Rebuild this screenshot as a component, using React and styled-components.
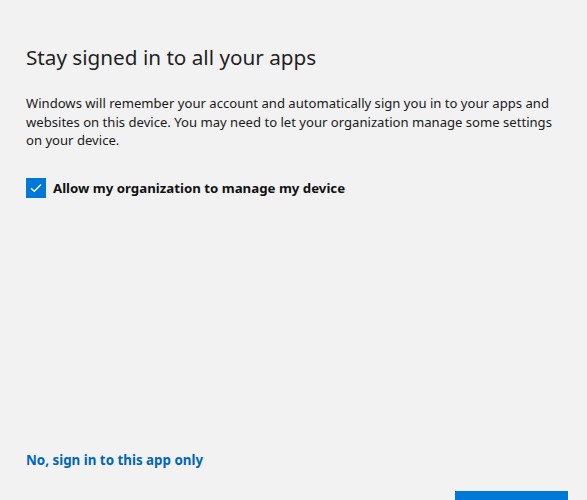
import React, { useState } from 'react';
import styled, { createGlobalStyle } from 'styled-components';

const GlobalStyle = createGlobalStyle`
    html, body {
        margin: 0;
        padding: 0;
        background: #f2f2f2;
    }
    body {
        font-family: 'Noto Sans', 'Open Sans', Arial, sans-serif;
        color: #1a1a1a;
    }
`;

const Page = styled.div`
    height: 500px;
    overflow: hidden;
    box-sizing: border-box;
    padding: 43px 19px 0 26px;
    display: flex;
    flex-direction: column;
`;

const Title = styled.h1`
    margin: 0;
    font-size: 20.7px;
    font-weight: 400;
    line-height: 28px;
    color: #1f1f1f;
`;

const Body = styled.p`
    margin: 23px 0 0;
    font-size: 13.1px;
    line-height: 18.7px;
    color: #1a1a1a;
`;

const CheckRow = styled.label`
    margin-top: 28px;
    display: flex;
    align-items: center;
    gap: 7px;
    cursor: pointer;
    font-size: 13.25px;
    font-weight: 700;
    color: #111;
`;

const Box = styled.span`
    width: 20px;
    height: 20px;
    box-sizing: border-box;
    display: flex;
    align-items: center;
    justify-content: center;
    background: ${({ checked }) => (checked ? '#0078d7' : 'transparent')};
    border: 2px solid ${({ checked }) => (checked ? '#0078d7' : '#333')};
`;

const Spacer = styled.div`
    flex: 1;
`;

const Link = styled.a`
    align-self: flex-start;
    font-size: 13.35px;
    font-weight: 700;
    color: #0067b8;
    text-decoration: none;
    cursor: pointer;
`;

const Footer = styled.div`
    margin-top: 22px;
    display: flex;
    justify-content: flex-end;
`;

const Button = styled.button`
    width: 113px;
    height: 32px;
    border: none;
    background: #0078d7;
    margin-bottom: -23px;
    cursor: pointer;
`;

export default function App() {
    const [checked, setChecked] = useState(true);

    return (
        <>
            <GlobalStyle />
            <Page>
                <Title>Stay signed in to all your apps</Title>
                <Body>
                    Windows will remember your account and automatically sign you in to your apps and
                    websites on this device. You may need to let your organization manage some settings
                    on your device.
                </Body>
                <CheckRow onClick={() => setChecked(!checked)}>
                    <Box checked={checked}>
                        {checked && (
                            <svg width="12" height="10" viewBox="0 0 12 10">
                                <path d="M1 5.2 L4.3 8.3 L11 1.5" fill="none" stroke="#fff" strokeWidth="1.4" />
                            </svg>
                        )}
                    </Box>
                    Allow my organization to manage my device
                </CheckRow>
                <Spacer />
                <Link>No, sign in to this app only</Link>
                <Footer>
                    <Button aria-label="Yes" />
                </Footer>
            </Page>
        </>
    );
}
